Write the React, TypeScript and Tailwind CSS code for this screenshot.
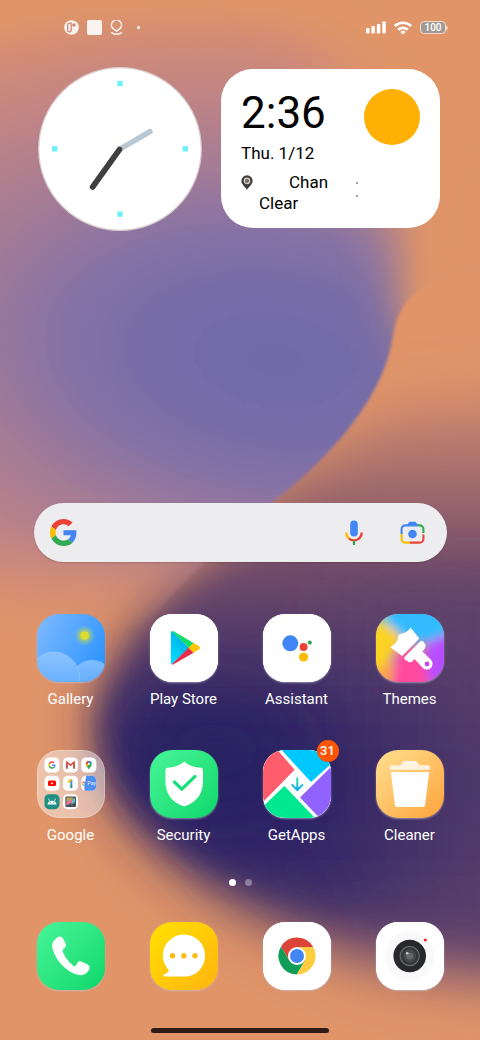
import type { ReactNode } from "react";

type App = {
  name: string;
  icon: ReactNode;
  badge?: number;
};

function Wallpaper() {
  return (
    <svg
      className="absolute inset-0 h-full w-full"
      viewBox="0 0 480 1040"
      preserveAspectRatio="none"
      aria-hidden="true"
    >
      <defs>
        <radialGradient id="wp-violet" gradientUnits="userSpaceOnUse" cx="0" cy="0" r="1" gradientTransform="translate(275 360) rotate(8) scale(600 350)">
          <stop offset="0" stopColor="#706aa9" />
          <stop offset="0.22" stopColor="#766ca8" />
          <stop offset="0.36" stopColor="#8672a5" />
          <stop offset="0.52" stopColor="#a17a97" />
          <stop offset="0.72" stopColor="#bd8387" />
          <stop offset="0.88" stopColor="#d08b78" />
          <stop offset="1" stopColor="#e09468" />
        </radialGradient>
        <linearGradient id="wp-fade" gradientUnits="userSpaceOnUse" x1="200" y1="500" x2="215" y2="620">
          <stop offset="0" stopColor="#fff" />
          <stop offset="0.3" stopColor="#fff" stopOpacity="0.8" />
          <stop offset="1" stopColor="#fff" stopOpacity="0" />
        </linearGradient>
        <mask id="wp-mask" maskUnits="userSpaceOnUse" x="-60" y="-60" width="600" height="760">
          <rect x="-60" y="-60" width="600" height="760" fill="url(#wp-fade)" />
        </mask>
        <linearGradient id="wp-night" gradientUnits="userSpaceOnUse" x1="0" y1="400" x2="0" y2="980">
          <stop offset="0" stopColor="#cb8670" />
          <stop offset="0.15" stopColor="#a06a6c" />
          <stop offset="0.28" stopColor="#764f6b" />
          <stop offset="0.4" stopColor="#543b69" />
          <stop offset="0.55" stopColor="#352966" />
          <stop offset="0.65" stopColor="#2a2164" />
          <stop offset="0.8" stopColor="#332867" />
          <stop offset="0.9" stopColor="#553c6b" />
          <stop offset="1" stopColor="#8c6073" />
        </linearGradient>
        <linearGradient id="wp-dusk" gradientUnits="userSpaceOnUse" x1="300" y1="0" x2="490" y2="0">
          <stop offset="0" stopColor="#62446d" stopOpacity="0" />
          <stop offset="1" stopColor="#62446d" stopOpacity="0.7" />
        </linearGradient>
        <filter id="wp-blur-l" x="-50%" y="-50%" width="200%" height="200%">
          <feGaussianBlur stdDeviation="28" />
        </filter>
        <filter id="wp-blur-m" x="-50%" y="-50%" width="200%" height="200%">
          <feGaussianBlur stdDeviation="16" />
        </filter>
        <filter id="wp-blur-s" x="-20%" y="-20%" width="140%" height="140%">
          <feGaussianBlur stdDeviation="1.5" />
        </filter>
        <clipPath id="wp-wave">
          <path d="M-60-60H540V265C450 262 402 280 393 335C386 392 335 455 268 506C230 536 190 575 130 640H-60Z" />
        </clipPath>
      </defs>
      <rect width="480" height="1040" fill="#e09468" />
      <path
        d="M620 390L400 410L270 490C220 545 165 590 135 640C100 690 88 725 112 785C140 850 235 910 320 945C380 970 440 985 620 985Z"
        fill="url(#wp-night)"
        filter="url(#wp-blur-l)"
      />
      <path
        d="M520 610L300 560C210 580 150 610 125 670C95 715 100 750 130 795C170 850 250 890 330 905L520 915Z"
        fill="url(#wp-night)"
        opacity="0.8"
        filter="url(#wp-blur-m)"
      />
      <path d="M620 580H310V820L400 930L620 960Z" fill="url(#wp-dusk)" filter="url(#wp-blur-l)" />
      <ellipse cx="215" cy="750" rx="80" ry="60" fill="#282062" opacity="0.7" filter="url(#wp-blur-l)" />
      <g filter="url(#wp-blur-s)">
        <g clipPath="url(#wp-wave)">
          <rect x="-60" y="-60" width="600" height="760" fill="url(#wp-violet)" mask="url(#wp-mask)" />
          <path d="M250-80C320 30 395 130 412 345L700 400V-80Z" fill="#e09468" filter="url(#wp-blur-l)" />
          <path d="M470 90C425 190 412 260 412 330L600 345V90Z" fill="#e09468" filter="url(#wp-blur-m)" />
        </g>
      </g>
    </svg>
  );
}

function GoogleG() {
  return (
    <>
      <path fill="#EA4335" d="M24 9.5c3.54 0 6.71 1.22 9.21 3.6l6.85-6.85C35.9 2.38 30.47 0 24 0 14.62 0 6.51 5.38 2.56 13.22l7.98 6.19C12.43 13.72 17.74 9.5 24 9.5z" />
      <path fill="#4285F4" d="M46.98 24.55c0-1.57-.15-3.09-.38-4.55H24v9.02h12.94c-.58 2.96-2.26 5.48-4.78 7.18l7.73 6c4.51-4.18 7.09-10.36 7.09-17.65z" />
      <path fill="#FBBC05" d="M10.53 28.59c-.48-1.45-.76-2.99-.76-4.59s.27-3.14.76-4.59l-7.98-6.19C.92 16.46 0 20.12 0 24c0 3.88.92 7.54 2.56 10.78l7.97-6.19z" />
      <path fill="#34A853" d="M24 48c6.48 0 11.93-2.13 15.89-5.81l-7.73-6c-2.15 1.45-4.92 2.3-8.16 2.3-6.26 0-11.57-4.22-13.47-9.91l-7.98 6.19C6.51 42.62 14.62 48 24 48z" />
    </>
  );
}

function StatusBar() {
  return (
    <header className="flex h-[55px] items-center justify-between pl-16 pr-8 text-white">
      <div className="flex items-center gap-2">
        <svg width="15" height="15" viewBox="0 0 15 15" aria-hidden="true">
          <circle cx="7.5" cy="7.5" r="7.3" fill="#faf3ef" />
          <path d="M7.6 3.2H5.6Q3.7 3.2 3.7 5V10.4Q3.7 11.8 5.4 11.8T7.2 10.4V3.2" fill="none" stroke="#cf8874" strokeWidth="1.3" />
          <circle cx="9.9" cy="5" r="1.8" fill="#cf8874" />
        </svg>
        <span className="h-[15px] w-[15px] rounded-xs bg-[#faf3ef]" />
        <svg width="13" height="15" viewBox="0 0 13 15" fill="none" stroke="#faf3ef" strokeWidth="1.5" aria-hidden="true">
          <path d="M6.5 11.2L2.6 8.2A5 5 0 1 1 10.4 8.2Z" strokeLinejoin="round" />
          <path d="M1.2 12.4Q3 14.2 6.5 14.2T11.8 12.4" />
        </svg>
        <span className="ml-1.5 h-[3px] w-[3px] rounded-full bg-white" />
      </div>
      <div className="flex items-center gap-2">
        <svg width="20" height="13" viewBox="0 0 20 13" fill="#fff" aria-hidden="true">
          <rect x="0" y="7" width="3.5" height="5.5" rx="1" />
          <rect x="5.4" y="5" width="3.5" height="7.5" rx="1" />
          <rect x="10.8" y="3" width="3.5" height="9.5" rx="1" />
          <rect x="16.3" y="0.5" width="3.5" height="12" rx="1" />
        </svg>
        <svg width="18" height="14" viewBox="0 0 18 14" fill="none" stroke="#fff" strokeWidth="2.7" aria-hidden="true">
          <path d="M0.9 5.1A11.5 11.5 0 0 1 17.1 5.1" />
          <path d="M4.2 8.8A6.8 6.8 0 0 1 13.8 8.8" />
          <path d="M9 13.6L6.4 11A3.7 3.7 0 0 1 11.6 11Z" fill="#fff" stroke="none" />
        </svg>
        <div className="flex items-center">
          <span className="flex h-[13px] w-[26px] items-center justify-center rounded-sm border border-[#f7dccb] bg-[#a29a97] text-[10px] leading-3 font-medium">
            100
          </span>
          <span className="h-1 w-0.5 rounded-r-sm bg-[#f7dccb]" />
        </div>
      </div>
    </header>
  );
}

function ClockWidget() {
  return (
    <svg className="w-[164px] shrink-0" viewBox="0 0 164 164" role="img" aria-label="Clock">
      <circle cx="82" cy="82" r="81.3" fill="#fff" stroke="#d9cdd0" strokeWidth="1.2" />
      <g fill="#6cf0fb">
        <rect x="79.3" y="13.8" width="5.4" height="5.4" />
        <rect x="79.3" y="144.4" width="5.4" height="5.4" />
        <rect x="14" y="79.1" width="5.4" height="5.4" />
        <rect x="144.6" y="79.1" width="5.4" height="5.4" />
      </g>
      <path d="M82 82L112 64.6" stroke="#b8c7d4" strokeWidth="5.4" strokeLinecap="round" />
      <path d="M81.5 82.5L54.6 120" stroke="#3f3f3f" strokeWidth="5.6" strokeLinecap="round" />
    </svg>
  );
}

function WeatherWidget() {
  return (
    <section className="flex-1 rounded-[32px] bg-white px-5 pt-5 pb-[14px] text-black">
      <div className="flex items-start justify-between">
        <div>
          <p className="text-[44px] leading-[48px]">2:36</p>
          <p className="mt-1.5 text-[17px] leading-5">Thu. 1/12</p>
        </div>
        <span className="h-14 w-14 rounded-full bg-[#ffb005]" />
      </div>
      <div className="mt-[9px] flex h-[21px] items-center text-[17px] leading-[21px]">
        <svg width="12" height="15" viewBox="0 0 12 15" aria-hidden="true">
          <path d="M6 0.3A5.6 5.6 0 0 1 11.6 6C11.6 9.2 8.2 11.6 6 14.7C3.8 11.6 0.4 9.2 0.4 6A5.6 5.6 0 0 1 6 0.3Z" fill="#3f3d3c" />
          <circle cx="6" cy="5.9" r="2.7" fill="#77706a" stroke="#d5cec8" strokeWidth="1.2" />
        </svg>
        <span className="ml-9">Chan</span>
        <svg className="ml-7 self-start" width="2" height="26" viewBox="0 0 2 26" aria-hidden="true">
          <path d="M1 10V12M1 23V25" stroke="#444" strokeWidth="1" />
        </svg>
      </div>
      <p className="pl-[18px] text-[17px] leading-[21px]">Clear</p>
    </section>
  );
}

function SearchBar() {
  return (
    <form
      role="search"
      className="mr-[33px] ml-[34px] flex h-[59px] items-center rounded-full bg-[#ededef] pr-[22px] pl-4 shadow-[0_1px_2px_rgba(0,0,0,0.15)]"
      onSubmit={(e) => e.preventDefault()}
    >
      <svg className="shrink-0" width="27" height="27" viewBox="0 0 48 48" aria-hidden="true">
        <GoogleG />
      </svg>
      <input aria-label="Search" className="min-w-0 flex-1 bg-transparent px-3 text-base text-gray-800 outline-none" />
      <button type="button" aria-label="Voice search">
        <svg width="18" height="26" viewBox="0 0 18 26" fill="none" strokeWidth="2.3" aria-hidden="true">
          <rect x="5.2" y="0.5" width="7.6" height="16" rx="3.8" fill="#4285f4" />
          <path d="M1.3 12.5C1.3 15.4 2.6 17.4 4 18.6" stroke="#fbbc04" />
          <path d="M4 18.6C6.8 21 11.2 21 14 18.6C15.6 17.2 16.7 15.2 16.7 12.5" stroke="#ea4335" />
          <path d="M9 20.6V25" stroke="#34a853" />
        </svg>
      </button>
      <button type="button" aria-label="Search with camera" className="ml-[37px]">
        <svg width="25" height="24" viewBox="0 0 25 24" fill="none" strokeWidth="2.1" aria-hidden="true">
          <path d="M7 4L8.8 1.4Q9.2 0.8 10 0.8H15Q15.8 0.8 16.2 1.4L18 4V5H7Z" fill="#4285f4" />
          <path d="M1.6 13V8A3.6 3.6 0 0 1 5.2 4.4H17.5" stroke="#4285f4" />
          <path d="M17.5 4.4H19.8A3.6 3.6 0 0 1 23.4 8V12" stroke="#34a853" />
          <path d="M23.4 13.5V18A3.6 3.6 0 0 1 19.8 21.6H10" stroke="#ea4335" />
          <path d="M10 21.6H5.2A3.6 3.6 0 0 1 1.6 18V13" stroke="#fbbc04" />
          <circle cx="12.5" cy="13" r="4.3" fill="#4285f4" />
        </svg>
      </button>
    </form>
  );
}

function Glyph({ children }: { children: ReactNode }) {
  return (
    <svg className="h-full w-full" viewBox="0 0 68 68" fill="none" aria-hidden="true">
      {children}
    </svg>
  );
}

const galleryIcon = (
  <Glyph>
    <defs>
      <linearGradient id="gal-sky" x1="0" y1="0.2" x2="1" y2="0.7">
        <stop stopColor="#7ab8ff" />
        <stop offset="1" stopColor="#2e94ff" />
      </linearGradient>
      <radialGradient id="gal-glow">
        <stop offset="0.3" stopColor="#d9e021" stopOpacity="0.8" />
        <stop offset="1" stopColor="#9ad08a" stopOpacity="0" />
      </radialGradient>
      <linearGradient id="gal-hill" x1="0" y1="0" x2="0" y2="1">
        <stop stopColor="#8cc3ff" />
        <stop offset="0.6" stopColor="#69b0ff" />
      </linearGradient>
    </defs>
    <rect width="68" height="68" fill="url(#gal-sky)" />
    <circle cx="47.6" cy="21.6" r="10.5" fill="url(#gal-glow)" />
    <circle cx="47.6" cy="21.6" r="4" fill="#e0dd2a" />
    <circle cx="55" cy="67" r="21" fill="url(#gal-hill)" opacity="0.85" />
    <circle cx="17" cy="63.5" r="25.5" fill="url(#gal-hill)" stroke="#9accff" strokeWidth="0.5" />
  </Glyph>
);

const playIcon = (
  <Glyph>
    <defs>
      <linearGradient id="play-blue" x1="0.8" y1="0" x2="0.1" y2="0.9">
        <stop stopColor="#00a5e0" />
        <stop offset="1" stopColor="#00dcff" />
      </linearGradient>
    </defs>
    <rect width="68" height="68" fill="#fff" />
    <path d="M20.8 18.4Q20.8 17 22 17.6L39 33.7L22 50Q20.8 50.4 20.8 49Z" fill="url(#play-blue)" />
    <path d="M21.6 17.2Q22.6 16.8 24 17.6L43.6 28.9L38.8 33.8Z" fill="#0fdc6b" />
    <path d="M21.6 50.4Q22.6 50.8 24 50L43.6 38.7L38.8 33.6Z" fill="#ea2d4b" />
    <path d="M43.4 28.8L49.2 32.3Q51 33.7 49.2 35.2L43.4 38.8L38.6 33.7Z" fill="#fdc703" />
  </Glyph>
);

const assistantIcon = (
  <Glyph>
    <rect width="68" height="68" fill="#fff" />
    <circle cx="27.3" cy="29.3" r="8" fill="#4285f4" />
    <circle cx="40.6" cy="33" r="4" fill="#ea4335" />
    <circle cx="40.6" cy="43" r="4.6" fill="#fbbc04" />
    <circle cx="46.8" cy="28.6" r="2.1" fill="#34a853" />
  </Glyph>
);

const themesIcon = (
  <Glyph>
    <defs>
      <filter id="th-blur" x="-50%" y="-50%" width="200%" height="200%">
        <feGaussianBlur stdDeviation="5" />
      </filter>
    </defs>
    <rect width="68" height="68" fill="#c98ba8" />
    <g filter="url(#th-blur)">
      <path d="M-15 10L12 10L28 25L14 42L6 80H-15Z" fill="#fbd324" />
      <path d="M4 52L18 50L12 85L-10 80Z" fill="#ffa14c" />
      <path d="M8-15H80V16L52 28L30 26L10 8Z" fill="#33bcff" />
      <path d="M80 18L52 28L48 50L58 80H80Z" fill="#b84dff" />
      <path d="M22 36L46 38L52 60L50 85H14Z" fill="#ff4a9e" />
      <path d="M-15-15H12L10 10H-15Z" fill="#8fd08c" />
    </g>
    <path d="M34.5 13.5L43.3 24.6L26.2 42L14.2 33.2C19 30 22 27.5 22.5 21C27 19 32 18.5 34.5 13.5Z" fill="#fff" />
    <path d="M44.2 27.4Q45.8 26 47.2 27.4L49.2 30.2Q50.6 32.4 48.8 34.6L46.4 37.4L55 45.8A5.8 5.8 0 0 1 46.8 54L38.6 45L36.2 47.4Q33.6 49.2 31.4 47.2L28.8 45.4Q27.4 44.2 28.6 43Z" fill="#fff" />
    <circle cx="51" cy="50" r="2.4" fill="#c04dea" />
  </Glyph>
);

const googleFolderIcon = (
  <Glyph>
    <rect width="68" height="68" fill="#fff" fillOpacity="0.45" />
    <rect x="0.5" y="0.5" width="67" height="67" rx="21.5" stroke="#fff" strokeOpacity="0.25" />
    <g fill="#fff">
      <rect x="7.5" y="7.5" width="15" height="15" rx="4.6" />
      <rect x="26" y="7.5" width="15" height="15" rx="4.6" />
      <rect x="44.3" y="7.5" width="15" height="15" rx="4.6" />
      <rect x="7.5" y="25.8" width="15" height="15" rx="4.6" />
      <rect x="26" y="25.8" width="15" height="15" rx="4.6" />
      <rect x="44.3" y="25.8" width="15" height="15" rx="4.6" />
      <rect x="26" y="44.2" width="15" height="15" rx="4.6" />
    </g>
    <g transform="translate(11.3 11.3) scale(0.155)">
      <GoogleG />
    </g>
    {/* Gmail */}
    <path d="M30 18.5V12.5" stroke="#4285f4" strokeWidth="1.6" />
    <path d="M37 18.5V12.5" stroke="#34a853" strokeWidth="1.6" />
    <path d="M30 18.7V12.2L33.5 15.2L37 12.2V18.7" stroke="#e2443a" strokeWidth="1.5" />
    {/* Maps */}
    <path d="M51.8 19.6C50.6 17 48.8 16 48.8 13.9A3 3 0 0 1 54.8 13.9C54.8 16 53 17 51.8 19.6Z" fill="#34a853" />
    <path d="M48.9 14.6A3 3 0 0 1 51.8 11L51.8 14Z" fill="#ea4335" />
    <path d="M51.8 10.9A3 3 0 0 1 54.7 13L51.8 14Z" fill="#4285f4" />
    <path d="M48.9 14.6L51.8 14L50.2 17Z" fill="#fbbc04" />
    <circle cx="51.8" cy="13.9" r="1.1" fill="#fff" />
    {/* YouTube */}
    <rect x="11" y="30.5" width="8" height="5.6" rx="1.6" fill="#f00" />
    <path d="M14.2 32L16.6 33.3L14.2 34.6Z" fill="#fff" />
    {/* Google One */}
    <path d="M34.3 30V37" stroke="#4285f4" strokeWidth="2" strokeLinecap="round" />
    <path d="M31.8 31.6L34 30" stroke="#fbbc04" strokeWidth="2" strokeLinecap="round" />
    <path d="M34.3 36V37" stroke="#34a853" strokeWidth="2" strokeLinecap="round" />
    {/* Google Pay */}
    <path d="M49.2 25.8H54.7A4.6 4.6 0 0 1 59.3 30.4V36.2A4.6 4.6 0 0 1 54.7 40.8H47.8L47.2 38Z" fill="#4f8df0" />
    <g transform="translate(45 31.6) scale(0.085)">
      <GoogleG />
    </g>
    <text x="50.6" y="35.4" fontSize="5" fill="#e3edfd">Pay</text>
    {/* Android */}
    <rect x="7.5" y="44.2" width="15" height="15" rx="4.6" fill="#1f8f84" />
    <path d="M10.4 54.5A4.7 4.7 0 0 1 19.6 54.5Z" fill="#fff" />
    <path d="M11.4 48.6L12.6 51M18.6 48.6L17.4 51" stroke="#fff" strokeWidth="0.8" />
    <circle cx="13.2" cy="52.8" r="0.6" fill="#1f8f84" />
    <circle cx="16.8" cy="52.8" r="0.6" fill="#1f8f84" />
    {/* Wallpapers */}
    <rect x="28.4" y="46.6" width="10.6" height="10.4" rx="1" fill="#4a4f55" />
    <path d="M29.5 47.6H37L29.5 55.5Z" fill="#b6a85a" />
    <path d="M29.5 52L36 49V52L30 55.5Z" fill="#e56ea8" />
    <path d="M36 49L38.2 48V52L34 55Z" fill="#58c4c0" />
  </Glyph>
);

const securityIcon = (
  <Glyph>
    <path d="M34.2 11.6C38 15 44.5 17.5 51 17.7Q53 17.9 53 20V31C53 44 46.5 51.6 36.4 55.8Q34.2 56.7 32 55.8C22 51.6 15.4 44 15.4 31V20Q15.4 17.9 17.4 17.7C24 17.5 30.4 15 34.2 11.6Z" fill="#fff" />
    <path d="M24.4 32L31.8 39.2L45 26.4" stroke="#15df79" strokeWidth="3.2" strokeLinejoin="round" strokeLinecap="round" />
  </Glyph>
);

const getAppsIcon = (
  <Glyph>
    <defs>
      <linearGradient id="ga-arrow" gradientUnits="userSpaceOnUse" x1="0" y1="28" x2="0" y2="40">
        <stop stopColor="#1ee2a0" />
        <stop offset="1" stopColor="#14a8f5" />
      </linearGradient>
    </defs>
    <rect width="68" height="68" fill="#fff" />
    <path d="M0 0H14.5L31.6 19.8L0 52Z" fill="#ff5c6c" />
    <path d="M18.6 0H68V14L48 32Z" fill="#00c8ff" />
    <path d="M68 17L37 47.4L56.5 68H68Z" fill="#9162ff" />
    <path d="M21.4 36L52 68H0V56.5Z" fill="#00e991" />
    <path d="M34.3 27.6V39M28.6 34.4L34.3 40L40 34.4" stroke="url(#ga-arrow)" strokeWidth="2" />
  </Glyph>
);

const cleanerIcon = (
  <Glyph>
    <defs>
      <linearGradient id="cl-lid" x1="0" y1="0" x2="0" y2="1">
        <stop stopColor="#fff" stopOpacity="0.85" />
        <stop offset="0.6" stopColor="#fff1dc" />
        <stop offset="1" stopColor="#fff" stopOpacity="0.8" />
      </linearGradient>
    </defs>
    <path d="M13.6 19.8V17Q13.6 15.2 15.6 15.2H23.5Q25 15.2 26 13.4Q27.2 11 29 11H39Q40.8 11 42 13.4Q43 15.2 44.5 15.2H52Q54 15.2 54 17V19.8Z" fill="url(#cl-lid)" />
    <path d="M14.8 22H53.2L49 55.2Q48.7 57 47 57H21Q19.3 57 19 55.2Z" fill="#fff" />
  </Glyph>
);

const phoneIcon = (
  <Glyph>
    <path
      d="M18.5 17C21 14 24 13.4 26 16.5L28.6 21.5C29.6 24 28.4 25.3 26.6 26.8C25 28.2 25.6 29.8 26.8 32C29.4 37 33 41.5 37.5 44.4C39 43.8 39.6 42 40.6 40.6C41.8 39 43.4 39 45 39.8L50.6 42.6C53.4 44.2 53 47 51 49.5C47.5 53.5 43 54 38 52C28 48 18.5 38 15.6 27C14.5 22.5 15.6 19.8 18.5 17Z"
      fill="#fff"
    />
  </Glyph>
);

const messagesIcon = (
  <Glyph>
    <path d="M34 12.4A21 21 0 0 1 55 33.4C55 45 46.5 54.4 35 54.4H15.5Q11.8 54 14 52.4Q17.5 51.4 19 48.2A21 21 0 0 1 34 12.4Z" fill="#fff" />
    <g fill="#fdbd10">
      <circle cx="22.5" cy="33.8" r="2.7" />
      <circle cx="33.8" cy="33.8" r="2.7" />
      <circle cx="45" cy="33.8" r="2.7" />
    </g>
  </Glyph>
);

const chromeIcon = (
  <Glyph>
    <rect width="68" height="68" fill="#fff" />
    <path d="M18.1 24.5L26.2 38.5L34 34V25H50.2A18.5 18.5 0 0 0 18.1 24.5Z" fill="#db4437" />
    <path d="M50.2 25H34V34L41.8 38.5L33.7 52.5A18.5 18.5 0 0 0 50.2 25Z" fill="#ffcd40" />
    <path d="M33.7 52.5L41.8 38.5L34 34L26.2 38.5L18.1 24.5A18.5 18.5 0 0 0 33.7 52.5Z" fill="#0f9d58" />
    <circle cx="34" cy="34" r="9" fill="#fff" />
    <circle cx="34" cy="34" r="7" fill="#4285f4" />
  </Glyph>
);

const cameraIcon = (
  <Glyph>
    <rect width="68" height="68" fill="#fff" />
    <circle cx="33.7" cy="34" r="24.5" fill="#f9f9f9" />
    <circle cx="33.7" cy="34" r="16.3" fill="#26282b" />
    <circle cx="33.7" cy="34" r="9.6" fill="#35373a" stroke="#63666b" strokeWidth="1.3" />
    <circle cx="33.7" cy="34" r="6.4" fill="#45474a" />
    <circle cx="33.7" cy="34" r="3.6" fill="#67696c" />
    <circle cx="31.2" cy="31.2" r="1.3" fill="#c6c8ca" />
    <circle cx="49.3" cy="18" r="1.6" fill="#f5222d" />
  </Glyph>
);

const tile = (bg: string, icon: ReactNode) => (
  <span className={`block h-full w-full overflow-hidden rounded-[22px] shadow-[0_1px_2px_rgba(200,200,220,0.6)] ${bg}`}>
    {icon}
  </span>
);

const homeApps: App[] = [
  { name: "Gallery", icon: tile("", galleryIcon) },
  { name: "Play Store", icon: tile("bg-white", playIcon) },
  { name: "Assistant", icon: tile("bg-white", assistantIcon) },
  { name: "Themes", icon: tile("", themesIcon) },
  { name: "Google", icon: <span className="block h-full w-full overflow-hidden rounded-[22px]">{googleFolderIcon}</span> },
  { name: "Security", icon: tile("bg-linear-to-br from-[#45f598] to-[#02d86a]", securityIcon) },
  { name: "GetApps", icon: tile("bg-white", getAppsIcon), badge: 31 },
  { name: "Cleaner", icon: tile("bg-linear-to-br from-[#ffdf8e] to-[#ffa437]", cleanerIcon) },
];

const dockApps: App[] = [
  { name: "Phone", icon: tile("bg-linear-to-br from-[#45f598] to-[#02d86a]", phoneIcon) },
  { name: "Messages", icon: tile("bg-linear-to-br from-[#ffe100] to-[#ffb30f]", messagesIcon) },
  { name: "Chrome", icon: tile("bg-white", chromeIcon) },
  { name: "Camera", icon: tile("bg-white", cameraIcon) },
];

export default function App() {
  return (
    <main className="relative flex min-h-screen flex-col overflow-hidden font-[Roboto,sans-serif]">
      <Wallpaper />
      <div className="relative flex flex-1 flex-col">
        <StatusBar />

        <div className="mt-3 flex items-start gap-[19px] pr-10 pl-[38px]">
          <ClockWidget />
          <div className="flex flex-1 pt-0.5">
            <WeatherWidget />
          </div>
        </div>

        <div className="mt-auto pt-10">
          <SearchBar />
        </div>

        <nav aria-label="Apps" className="mt-[52px] grid grid-cols-4 gap-y-[41px] px-[14px]">
          {homeApps.map((app) => (
            <button key={app.name} type="button" className="flex flex-col items-center">
              <span className="relative block h-[68px] w-[68px]">
                {app.icon}
                {app.badge && (
                  <span className="absolute -top-2.5 -right-2 flex h-[22px] w-[22px] items-center justify-center rounded-full bg-[#ff5502] text-[13px] font-medium text-white">
                    {app.badge}
                  </span>
                )}
              </span>
              <span className="mt-[7px] text-[15px] leading-5 text-white">{app.name}</span>
            </button>
          ))}
        </nav>

        <div className="mt-[34px] flex justify-center gap-[9px]">
          <span className="h-[7px] w-[7px] rounded-full bg-white" />
          <span className="h-[7px] w-[7px] rounded-full bg-white/35" />
        </div>

        <nav aria-label="Dock" className="mt-9 grid grid-cols-4 px-[14px]">
          {dockApps.map((app) => (
            <button key={app.name} type="button" aria-label={app.name} className="flex justify-center">
              <span className="block h-[68px] w-[68px]">{app.icon}</span>
            </button>
          ))}
        </nav>

        <div className="mx-auto mt-[38px] mb-[7px] h-[5px] w-[178px] rounded-full bg-[#2e1c16]" />
      </div>
    </main>
  );
}
